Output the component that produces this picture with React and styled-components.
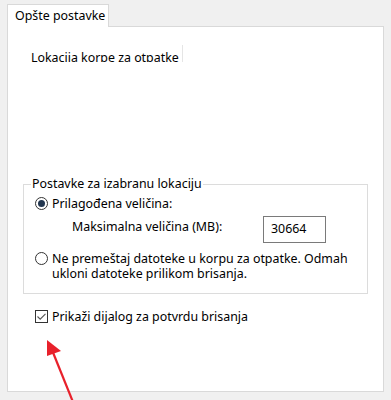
import React from 'react'
import styled, { createGlobalStyle } from 'styled-components'

const GlobalStyle = createGlobalStyle`
    html, body {
        margin: 0;
        padding: 0;
        background: #f0f0f0;
        font-family: "Noto Sans", "Liberation Sans", sans-serif;
        font-size: 12.4px;
        color: #000;
    }
`

const Window = styled.div`
    position: relative;
    width: 391px;
    height: 400px;
    padding: 4px 7px 0 7px;
    box-sizing: border-box;
    overflow: hidden;
`

const Tab = styled.div`
    position: relative;
    z-index: 1;
    width: 102px;
    height: 23px;
    box-sizing: border-box;
    margin-bottom: -1px;
    padding: 3px 0 0 7px;
    line-height: 16px;
    background: #fff;
    border: 1px solid #d9d9d9;
    border-bottom: none;
`

const Panel = styled.div`
    height: 366px;
    box-sizing: border-box;
    background: #fff;
    border: 1px solid #d9d9d9;
    display: flex;
    flex-direction: column;
`

const HeaderCell = styled.div`
    margin: 18px 0 0 16px;
    width: 159px;
    height: 17px;
    box-sizing: border-box;
    padding: 5px 0 0 7px;
    line-height: 16px;
    overflow: hidden;
    border-right: 1px solid #e5e5e5;
    white-space: nowrap;
`

const Group = styled.fieldset`
    margin: 114px 0 0 15px;
    width: 345px;
    height: 118px;
    box-sizing: border-box;
    padding: 4px 0 0 11px;
    border: 1px solid #dcdcdc;
    display: flex;
    flex-direction: column;
`

const Legend = styled.legend`
    padding: 0 1px;
    margin-left: -4px;
    line-height: 16px;
`

const OptionRow = styled.label`
    display: flex;
    align-items: flex-start;
    gap: 4px;
    line-height: 15px;
    margin-top: ${p => p.$top || 0}px;
`

const Radio = styled.span`
    flex: none;
    width: 13px;
    height: 13px;
    box-sizing: border-box;
    margin-top: 1px;
    border-radius: 50%;
    border: 1px solid #333;
    background: #fff;
    display: flex;
    align-items: center;
    justify-content: center;

    &::after {
        content: '';
        display: ${p => (p.$checked ? 'block' : 'none')};
        width: 7px;
        height: 7px;
        border-radius: 50%;
        background: #22364f;
    }
`

const SizeRow = styled.div`
    display: flex;
    align-items: center;
    margin: 5px 0 0 37px;
    height: 27px;
`

const SizeLabel = styled.span`
    width: 191px;
    margin-top: -6px;
`

const SizeInput = styled.div`
    width: 63px;
    height: 27px;
    box-sizing: border-box;
    border: 1px solid #7a7a7a;
    padding: 4px 0 0 7px;
    line-height: 16px;
`

const CheckRow = styled.label`
    display: flex;
    align-items: center;
    gap: 4px;
    margin: 15px 0 0 27px;
    line-height: 15px;
`

const Box = styled.span`
    flex: none;
    width: 13px;
    height: 13px;
    box-sizing: border-box;
    border: 1px solid #333;
    display: flex;
    align-items: center;
    justify-content: center;
`

const Arrow = styled.svg`
    position: absolute;
    left: 0;
    top: 0;
    pointer-events: none;
`

export default () => (
    <Window>
        <GlobalStyle />
        <Tab>Opšte postavke</Tab>
        <Panel>
            <HeaderCell>Lokacija korpe za otpatke</HeaderCell>
            <Group>
                <Legend>Postavke za izabranu lokaciju</Legend>
                <OptionRow>
                    <Radio $checked />
                    <span>Prilagođena veličina:</span>
                </OptionRow>
                <SizeRow>
                    <SizeLabel>Maksimalna veličina (MB):</SizeLabel>
                    <SizeInput>30664</SizeInput>
                </SizeRow>
                <OptionRow $top={8}>
                    <Radio />
                    <span>Ne premeštaj datoteke u korpu za otpatke. Odmah<br />ukloni datoteke prilikom brisanja.</span>
                </OptionRow>
            </Group>
            <CheckRow>
                <Box>
                    <svg width="11" height="11" viewBox="0 0 11 11">
                        <path d="M1.5 5.5 L4.2 8.2 L9.5 2.8" fill="none" stroke="#555" strokeWidth="1.1" />
                    </svg>
                </Box>
                <span>Prikaži dijalog za potvrdu brisanja</span>
            </CheckRow>
        </Panel>
        <Arrow width="391" height="400" viewBox="0 0 391 400">
            <line x1="73" y1="402" x2="52" y2="350" stroke="#e8212b" strokeWidth="2.2" />
            <polygon points="47,340 61,351 47,356" fill="#e8212b" />
        </Arrow>
    </Window>
)
